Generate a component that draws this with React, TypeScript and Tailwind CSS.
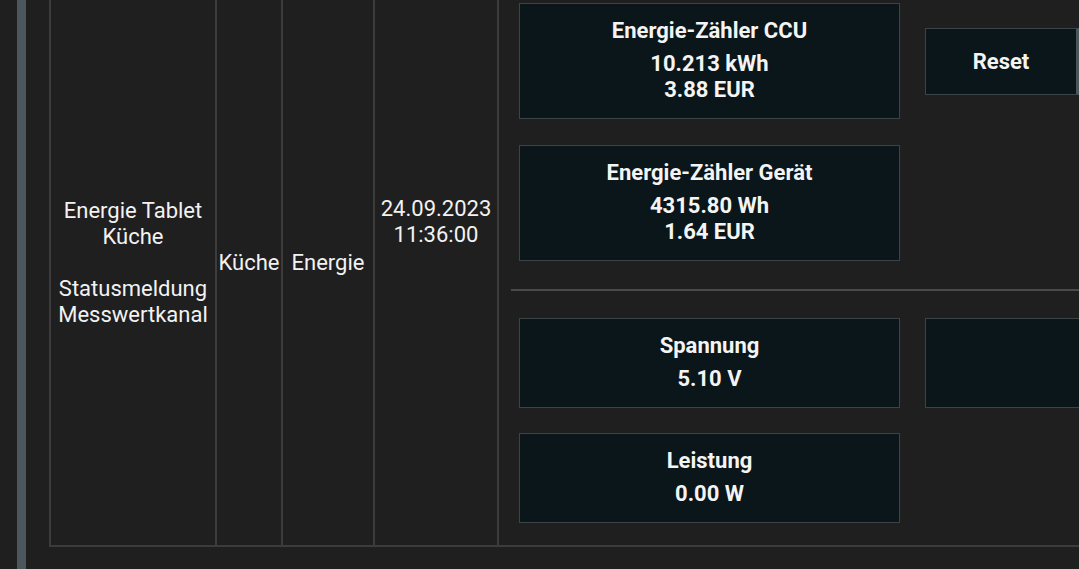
import React from "react";

const cardCls =
  "w-[381px] border border-[#3b4446] bg-[#0a1619] pt-[14px] pb-[15px] flex flex-col items-center text-center font-bold text-[22px] leading-[26px] text-[#f4f4f4]";

function Card({ title, lines }: { title: string; lines: string[] }) {
  return (
    <div className={cardCls}>
      <div className="mb-[7px]">{title}</div>
      {lines.map((l) => (
        <div key={l}>{l}</div>
      ))}
    </div>
  );
}

export default function App() {
  return (
    <div
      className="w-[1079px] h-[569px] overflow-hidden bg-[#1f1f1f] flex text-[#f2f2f2]"
      style={{ fontFamily: "Roboto, 'Noto Sans', sans-serif" }}
    >
      <div className="w-[17px] shrink-0" />
      <div className="w-[9px] shrink-0 bg-[#4b575c]" />
      <div className="w-[23px] shrink-0" />
      <div className="flex-1 min-w-0">
        <div className="-mt-[22px] flex border-2 border-r-0 border-[#3c3c3c] w-[1100px]">
          <div className="w-[166px] shrink-0 border-r-2 border-[#3c3c3c] flex items-center justify-center text-center text-[22px] leading-[26px]">
            <div>
              <div>Energie Tablet</div>
              <div>Küche</div>
              <div>&nbsp;</div>
              <div>Statusmeldung</div>
              <div>Messwertkanal</div>
            </div>
          </div>
          <div className="w-[66px] shrink-0 border-r-2 border-[#3c3c3c] flex items-center justify-center text-[22px] leading-[26px]">
            Küche
          </div>
          <div className="w-[92px] shrink-0 border-r-2 border-[#3c3c3c] flex items-center justify-center text-[22px] leading-[26px]">
            Energie
          </div>
          <div className="w-[124px] shrink-0 border-r-2 border-[#3c3c3c] flex items-center justify-center text-center text-[22px] leading-[26px]">
            <div className="pb-[82px]">
              <div>24.09.2023</div>
              <div>11:36:00</div>
            </div>
          </div>
          <div className="flex-1 pl-[12px]">
            <div className="pt-[23px] pb-[28px] pl-[8px] flex flex-col gap-[26px]">
              <div className="flex items-center gap-[25px]">
                <Card title="Energie-Zähler CCU" lines={["10.213 kWh", "3.88 EUR"]} />
                <div className="w-[154px] h-[67px] border border-r-[3px] border-[#3b4446] border-r-[#4a585c] bg-[#0a1619] flex items-center justify-center font-bold text-[22px] text-[#f4f4f4]">
                  Reset
                </div>
              </div>
              <Card title="Energie-Zähler Gerät" lines={["4315.80 Wh", "1.64 EUR"]} />
            </div>
            <div className="border-t-2 border-[#4a4a4a] pt-[27px] pb-[22px] pl-[8px] flex flex-col gap-[25px]">
              <div className="flex items-stretch gap-[25px]">
                <Card title="Spannung" lines={["5.10 V"]} />
                <div className="w-[200px] border border-[#3b4446] bg-[#0a1619]" />
              </div>
              <Card title="Leistung" lines={["0.00 W"]} />
            </div>
          </div>
        </div>
      </div>
    </div>
  );
}
